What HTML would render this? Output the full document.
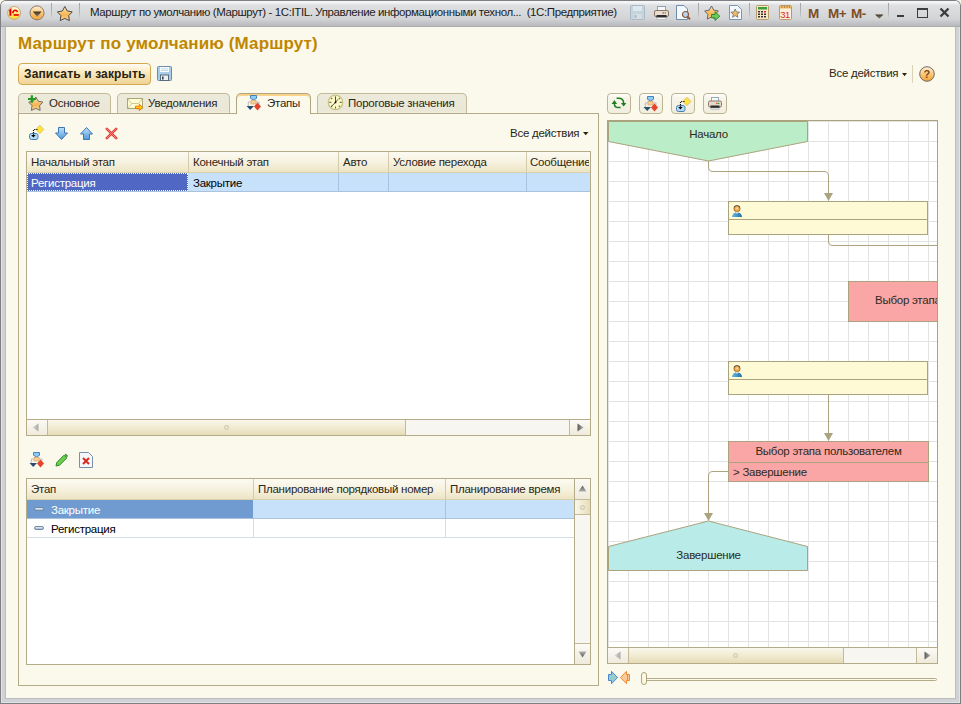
<!DOCTYPE html><html><head><meta charset="utf-8"><style>
*{box-sizing:border-box;margin:0;padding:0}
html,body{width:961px;height:704px;overflow:hidden;background:#fbf9ec;font-family:"Liberation Sans",sans-serif;font-size:11px;color:#222}
.a{position:absolute}
.t{position:absolute;white-space:pre;line-height:13px;font-size:11.5px;letter-spacing:-0.25px;color:#2b2617;margin-left:-1px}
.sep{position:absolute;width:1px;background:linear-gradient(#a2a3a6,#b4b5b8 60%,rgba(200,201,204,0))}
.tab{position:absolute;top:93px;height:20px;background:linear-gradient(#eceadb,#eae7d6 90%,#f2f0e4);border:1px solid #c2ba98;border-bottom:none;border-radius:5px 5px 0 0}
.tab.act{height:21px;background:#fbf9ec;border-color:#aea680;box-shadow:inset 0 2px 0 #f9d38a}
.btn{position:absolute;top:93px;width:24px;height:21px;border:1px solid #bdb592;border-radius:4px;background:linear-gradient(#ffffff 0,#f7f5ea 20%,#f1eedf 100%)}
.hdr{position:absolute;background:linear-gradient(#fcfaf2 0%,#f6f1de 55%,#ede4c4 100%)}
.vl{position:absolute;width:1px;background:#d3cbaa}
.sb{position:absolute;border:1px solid #b4ac88}
.thumbh{background:linear-gradient(#f9f7ec 0%,#f1ebd2 50%,#e7dcb8 100%)}
.thumbv{background:linear-gradient(90deg,#f9f7ec 0%,#f1ebd2 50%,#e7dcb8 100%)}
.btnh{background:linear-gradient(#fbfaf4,#efeadb)}
</style></head><body>
<div class="a" style="left:0;top:0;width:961px;height:704px;background:#7d7f82;border-radius:6px 6px 0 0"></div>
<div class="a" style="left:1px;top:1px;width:959px;height:702px;background:#e1e3e5;border-radius:5px 5px 0 0"></div>
<div class="a" style="left:2px;top:20px;width:957px;height:682px;background:#d0d2d5"></div>
<div class="a" style="left:1px;top:1px;width:959px;height:26px;border-radius:5px 5px 0 0;background:linear-gradient(#f7f7f8 0px,#f1f2f3 2px,#dfe0e2 4px,#d3d4d6 18px,#c6c7ca 21px,#b9babd 25px,#9d9ea1 26px)"></div>
<div class="a" style="left:5px;top:27px;width:951px;height:672px;background:#babcbf"></div>
<div class="a" style="left:6px;top:27px;width:949px;height:671px;background:#fbf9ec"></div>
<div class="sep" style="left:51px;top:3px;height:16px"></div>
<div class="sep" style="left:79px;top:3px;height:16px"></div>
<div class="sep" style="left:698px;top:3px;height:16px"></div>
<div class="sep" style="left:749px;top:3px;height:16px"></div>
<div class="sep" style="left:800px;top:3px;height:16px"></div>
<div class="sep" style="left:888px;top:3px;height:16px"></div>
<div class="t" style="left:91px;top:6px;font-size:11.5px;color:#1c1c1c;letter-spacing:-0.4px">Маршрут по умолчанию (Маршрут) - 1C:ITIL. Управление информационными технол...  (1С:Предприятие)</div>
<div class="t" style="left:19px;top:34px;font-size:17px;line-height:19px;font-weight:bold;color:#c08600;letter-spacing:0.14px">Маршрут по умолчанию (Маршрут)</div>
<div class="a" style="left:18px;top:63px;width:133px;height:22px;border:1px solid #d3a850;border-radius:4px;background:linear-gradient(#fffdf6 0,#fdf1d4 25%,#f6e2b0 60%,#efd496 100%)"></div>
<div class="t" style="left:25px;top:68px;font-size:12px;font-weight:bold;color:#2a2010;letter-spacing:0.14px">Записать и закрыть</div>
<div class="t" style="left:830px;top:67px">Все действия</div>
<div class="a" style="left:912px;top:65px;width:1px;height:18px;background:#d9d3ba"></div>
<div class="a" style="left:18px;top:113px;width:581px;height:573px;border:1px solid #b4ac88"></div>
<div class="tab" style="left:18px;width:93px"></div>
<div class="tab" style="left:117px;width:113px"></div>
<div class="tab act" style="left:236px;width:75px"></div>
<div class="tab" style="left:317px;width:150px"></div>
<div class="t" style="left:50px;top:97px">Основное</div>
<div class="t" style="left:149px;top:97px">Уведомления</div>
<div class="t" style="left:268px;top:97px">Этапы</div>
<div class="t" style="left:349px;top:97px">Пороговые значения</div>
<div class="t" style="left:511px;top:127px">Все действия</div>
<div class="a" style="left:26px;top:151px;width:565px;height:285px;border:1px solid #b4ac88;background:#fff"></div>
<div class="hdr" style="left:27px;top:152px;width:563px;height:21px;border-bottom:1px solid #d9d0ad"></div>
<div class="vl" style="left:188px;top:152px;height:20px"></div>
<div class="vl" style="left:338px;top:152px;height:20px"></div>
<div class="vl" style="left:388px;top:152px;height:20px"></div>
<div class="vl" style="left:526px;top:152px;height:20px"></div>
<div class="a" style="left:27px;top:173px;width:563px;height:19px;background:#c8e1fb;border-bottom:1px solid #a9c3de"></div>
<div class="a" style="left:338px;top:173px;width:1px;height:18px;background:#a9c3de"></div>
<div class="a" style="left:388px;top:173px;width:1px;height:18px;background:#a9c3de"></div>
<div class="a" style="left:526px;top:173px;width:1px;height:18px;background:#a9c3de"></div>
<div class="a" style="left:27px;top:173px;width:161px;height:18px;background:#5068c4;outline:1px dotted #fff;outline-offset:-1px"></div>
<div class="t" style="margin-left:0;left:31px;top:156px">Начальный этап</div>
<div class="t" style="margin-left:0;left:193px;top:156px">Конечный этап</div>
<div class="t" style="margin-left:0;left:343px;top:156px">Авто</div>
<div class="t" style="margin-left:0;left:393px;top:156px">Условие перехода</div>
<div class="a" style="left:527px;top:152px;width:62px;height:20px;overflow:hidden"><div class="t" style="left:4px;top:4px">Сообщение</div></div>
<div class="t" style="margin-left:0;left:31px;top:177px;color:#fff">Регистрация</div>
<div class="t" style="margin-left:0;left:193px;top:177px;color:#000">Закрытие</div>
<div class="a" style="left:26px;top:419px;width:565px;height:17px;border:1px solid #b4ac88;background:#f8f6f0"></div>
<div class="a btnh" style="left:27px;top:420px;width:21px;height:15px;border-right:1px solid #c2ba98"></div>
<div class="a thumbh" style="left:48px;top:420px;width:358px;height:15px;border-right:1px solid #c2ba98"></div>
<div class="a btnh" style="left:569px;top:420px;width:21px;height:15px;border-left:1px solid #c2ba98"></div>
<div class="a" style="left:26px;top:478px;width:565px;height:187px;border:1px solid #b4ac88;background:#fff"></div>
<div class="hdr" style="left:27px;top:479px;width:547px;height:21px;border-bottom:1px solid #d9d0ad"></div>
<div class="vl" style="left:253px;top:479px;height:20px"></div>
<div class="vl" style="left:445px;top:479px;height:20px"></div>
<div class="a" style="left:27px;top:500px;width:547px;height:19px;background:#c8e1fb;border-bottom:1px solid #a9c3de"></div>
<div class="a" style="left:27px;top:500px;width:226px;height:18px;background:#6f9bd1"></div>
<div class="a" style="left:445px;top:500px;width:1px;height:18px;background:#a9c3de"></div>
<div class="a" style="left:27px;top:519px;width:547px;height:19px;border-bottom:1px solid #d5dde6"></div>
<div class="a" style="left:253px;top:519px;width:1px;height:18px;background:#d5dde6"></div>
<div class="a" style="left:445px;top:519px;width:1px;height:18px;background:#d5dde6"></div>
<div class="t" style="margin-left:0;left:31px;top:483px">Этап</div>
<div class="t" style="margin-left:0;left:258px;top:483px">Планирование порядковый номер</div>
<div class="t" style="margin-left:0;left:450px;top:483px">Планирование время</div>
<div class="t" style="margin-left:0;left:51px;top:504px;color:#fff">Закрытие</div>
<div class="t" style="margin-left:0;left:51px;top:523px;color:#000">Регистрация</div>
<div class="a" style="left:34px;top:507px;width:10px;height:4px;border-radius:2px;background:linear-gradient(#e9f1f8,#9fb8cf);border:1px solid #6f8aa6"></div>
<div class="a" style="left:34px;top:526px;width:10px;height:4px;border-radius:2px;background:linear-gradient(#e9f1f8,#9fb8cf);border:1px solid #6f8aa6"></div>
<div class="a" style="left:574px;top:478px;width:17px;height:187px;border:1px solid #b4ac88;background:#f8f6f0"></div>
<div class="a btnh" style="left:575px;top:479px;width:15px;height:21px;border-bottom:1px solid #c2ba98"></div>
<div class="a thumbv" style="left:575px;top:500px;width:15px;height:15px;border-bottom:1px solid #c2ba98"></div>
<div class="a btnh" style="left:575px;top:643px;width:15px;height:21px;border-top:1px solid #c2ba98"></div>
<div class="btn" style="left:607px"></div>
<div class="btn" style="left:639px"></div>
<div class="btn" style="left:671px"></div>
<div class="btn" style="left:703px"></div>
<svg class="a" style="left:607px;top:120px" width="331" height="544" viewBox="0 0 331 544">
<rect x="0" y="0" width="331" height="544" fill="#fff"/>
<path d="M1.5 1V527M21.5 1V527M41.5 1V527M61.5 1V527M81.5 1V527M101.5 1V527M121.5 1V527M141.5 1V527M161.5 1V527M181.5 1V527M201.5 1V527M221.5 1V527M241.5 1V527M261.5 1V527M281.5 1V527M301.5 1V527M321.5 1V527M1 1.5H330M1 21.5H330M1 41.5H330M1 61.5H330M1 81.5H330M1 101.5H330M1 121.5H330M1 141.5H330M1 161.5H330M1 181.5H330M1 201.5H330M1 221.5H330M1 241.5H330M1 261.5H330M1 281.5H330M1 301.5H330M1 321.5H330M1 341.5H330M1 361.5H330M1 381.5H330M1 401.5H330M1 421.5H330M1 441.5H330M1 461.5H330M1 481.5H330M1 501.5H330M1 521.5H330" stroke="#e3e3e3" stroke-width="1" fill="none" shape-rendering="crispEdges"/>
<polygon points="1.5,1.5 200.5,1.5 200.5,21.5 101.5,41 1.5,21.5" fill="#bbedc8" stroke="#aba37d" stroke-width="1"/>
<path d="M101.5 41V47Q101.5 51.5 106 51.5H217Q221.5 51.5 221.5 56V74" stroke="#aba37d" fill="none"/>
<polygon points="217,73 226,73 221.5,81" fill="#aba37d"/>
<rect x="121.5" y="81.5" width="199" height="33" fill="#fefad6" stroke="#aba37d"/>
<path d="M121 99.5H321" stroke="#aba37d"/>
<path d="M221.5 114V121Q221.5 125.5 226 125.5H333" stroke="#aba37d" fill="none"/>
<rect x="241.5" y="161.5" width="100" height="40" fill="#fba6a6" stroke="#aba37d"/>
<rect x="121.5" y="241.5" width="199" height="33" fill="#fefad6" stroke="#aba37d"/>
<path d="M121 259.5H321" stroke="#aba37d"/>
<path d="M221.5 274V314" stroke="#aba37d" fill="none"/>
<polygon points="217,313 226,313 221.5,321" fill="#aba37d"/>
<rect x="121.5" y="321.5" width="200" height="40" fill="#fba6a6" stroke="#aba37d"/>
<path d="M121 342.5H322" stroke="#aba37d"/>
<path d="M121 351.5H106Q101.5 351.5 101.5 356V394" stroke="#aba37d" fill="none"/>
<polygon points="97,393 106,393 101.5,401" fill="#aba37d"/>
<polygon points="101.5,401 200.5,426.5 200.5,450.5 1.5,450.5 1.5,426.5" fill="#b9ece8" stroke="#aba37d" stroke-width="1"/>
<text x="101.5" y="18" font-family="Liberation Sans" font-size="11.5" letter-spacing="-0.25" fill="#2e2a20" text-anchor="middle">Начало</text>
<text x="268" y="184" font-family="Liberation Sans" font-size="11.5" letter-spacing="-0.25" fill="#2e2a20" text-anchor="start">Выбор этапа</text>
<text x="221.5" y="335" font-family="Liberation Sans" font-size="11.5" letter-spacing="-0.25" fill="#2e2a20" text-anchor="middle">Выбор этапа пользователем</text>
<text x="126" y="356" font-family="Liberation Sans" font-size="11.5" letter-spacing="-0.25" fill="#2e2a20" text-anchor="start">&gt; Завершение</text>
<text x="101.5" y="439" font-family="Liberation Sans" font-size="11.5" letter-spacing="-0.25" fill="#2e2a20" text-anchor="middle">Завершение</text>
<g transform="translate(125,85)"><defs><linearGradient id="pb205" x1="0" y1="0" x2="1" y2="0"><stop offset="0" stop-color="#6ab8e0"/><stop offset="1" stop-color="#1f6ea8"/></linearGradient><radialGradient id="pf205" cx=".5" cy=".4" r=".6"><stop offset="0" stop-color="#ffd79a"/><stop offset="1" stop-color="#d98420"/></radialGradient></defs><circle cx="5" cy="3.6" r="3.3" fill="#3a2a18"/><circle cx="5" cy="4" r="2.9" fill="url(#pf205)"/><path d="M0 12Q0 7.6 5 7.4Q10 7.6 10 12Z" fill="url(#pb205)"/><path d="M3.6 7.6L5 8.8L6.4 7.6Z" fill="#fff"/></g>
<g transform="translate(125,245)"><defs><linearGradient id="pb365" x1="0" y1="0" x2="1" y2="0"><stop offset="0" stop-color="#6ab8e0"/><stop offset="1" stop-color="#1f6ea8"/></linearGradient><radialGradient id="pf365" cx=".5" cy=".4" r=".6"><stop offset="0" stop-color="#ffd79a"/><stop offset="1" stop-color="#d98420"/></radialGradient></defs><circle cx="5" cy="3.6" r="3.3" fill="#3a2a18"/><circle cx="5" cy="4" r="2.9" fill="url(#pf365)"/><path d="M0 12Q0 7.6 5 7.4Q10 7.6 10 12Z" fill="url(#pb365)"/><path d="M3.6 7.6L5 8.8L6.4 7.6Z" fill="#fff"/></g>
<rect x="0.5" y="0.5" width="330" height="543" fill="none" stroke="#aba37d"/>
</svg>
<div class="a" style="left:607px;top:647px;width:331px;height:17px;border:1px solid #b4ac88;background:#f8f6f0"></div>
<div class="a btnh" style="left:608px;top:648px;width:21px;height:15px;border-right:1px solid #c2ba98"></div>
<div class="a thumbh" style="left:629px;top:648px;width:215px;height:15px;border-right:1px solid #c2ba98"></div>
<div class="a btnh" style="left:916px;top:648px;width:21px;height:15px;border-left:1px solid #c2ba98"></div>
<div class="a" style="left:644px;top:678px;width:293px;height:3px;border:1px solid #b4ac88;border-radius:0 2px 2px 0;background:#fbf9ec"></div>
<div class="a" style="left:641px;top:672px;width:6px;height:13px;border:1px solid #aea680;border-radius:3px;background:#fcf7e0"></div>
<svg width="0" height="0" style="position:absolute"><defs>
<linearGradient id="gY" x1="0" y1="0" x2="0" y2="1"><stop offset="0" stop-color="#fffbe0"/><stop offset=".55" stop-color="#ffec80"/><stop offset="1" stop-color="#ffdf10"/></linearGradient>
<linearGradient id="gO" x1="0" y1="0" x2="0" y2="1"><stop offset="0" stop-color="#fff0d8"/><stop offset=".5" stop-color="#fbc879"/><stop offset="1" stop-color="#f2a030"/></linearGradient>
<linearGradient id="gS" x1="0" y1="0" x2="0" y2="1"><stop offset="0" stop-color="#fde7b8"/><stop offset=".6" stop-color="#f8b450"/><stop offset="1" stop-color="#fcd79a"/></linearGradient>
<linearGradient id="gB" x1="0" y1="0" x2="0" y2="1"><stop offset="0" stop-color="#bfe2fb"/><stop offset="1" stop-color="#4f98d6"/></linearGradient>
<linearGradient id="gBl" x1="0" y1="0" x2="0" y2="1"><stop offset="0" stop-color="#88d0ff"/><stop offset="1" stop-color="#3a86cf"/></linearGradient>
<linearGradient id="gTri" x1="0" y1="0" x2="0" y2="1"><stop offset="0" stop-color="#3a3020"/><stop offset="1" stop-color="#9a8a70"/></linearGradient>
<linearGradient id="gAr" x1="0" y1="0" x2="1" y2="0"><stop offset="0" stop-color="#5a5a5a"/><stop offset="1" stop-color="#b0b0b0"/></linearGradient>
<linearGradient id="gArL" x1="1" y1="0" x2="0" y2="0"><stop offset="0" stop-color="#a8a8a8"/><stop offset="1" stop-color="#d8d8d8"/></linearGradient>
<linearGradient id="gArU" x1="0" y1="0" x2="0" y2="1"><stop offset="0" stop-color="#5a5a5a"/><stop offset="1" stop-color="#b0b0b0"/></linearGradient>
<linearGradient id="gArD" x1="0" y1="1" x2="0" y2="0"><stop offset="0" stop-color="#5a5a5a"/><stop offset="1" stop-color="#b0b0b0"/></linearGradient>
</defs></svg>
<svg class="a" style="left:7px;top:6px" width="15" height="15" viewBox="0 0 15 15"><circle cx="7.1" cy="6.9" r="6.4" fill="url(#gY)" stroke="#c9a27a" stroke-width="1"/><path d="M2.3 5.4L3.4 4.2V9.8" stroke="#e8000a" stroke-width="2" fill="none"/><path d="M10.4 6.1Q10 4.3 8.2 4.3Q6 4.4 5.9 7.2" stroke="#e8000a" stroke-width="1.6" fill="none"/><rect x="6.6" y="8.1" width="5.2" height="1.7" fill="#e8000a"/></svg>
<svg class="a" style="left:29px;top:5px" width="16" height="16" viewBox="0 0 16 16"><circle cx="8" cy="7.9" r="7" fill="url(#gO)" stroke="#8d7a66" stroke-width="1"/><polygon points="3.8,6.6 12.6,6.6 8.2,12" fill="url(#gTri)"/></svg>
<svg class="a" style="left:56px;top:5px" width="18" height="17" viewBox="0 0 18 17"><polygon points="8.80,1.50 11.21,5.98 16.22,6.89 12.70,10.57 13.38,15.61 8.80,13.40 4.22,15.61 4.90,10.57 1.38,6.89 6.39,5.98" fill="url(#gS)" stroke="#4a4a4a" stroke-width="1" stroke-linejoin="round"/></svg>
<svg class="a" style="left:630px;top:5px" width="15" height="15" viewBox="0 0 15 15"><rect x="0.5" y="0.5" width="14" height="14" rx="1" fill="#c5d3dd" stroke="#a9bac8"/><rect x="3" y="1" width="9" height="5" fill="#dde8ee"/><rect x="3.5" y="9" width="8" height="5" fill="#d7dfe4"/><rect x="4.5" y="10" width="2" height="3" fill="#a9bac8"/></svg>
<svg class="a" style="left:654px;top:6px" width="15" height="14" viewBox="0 0 15 14"><rect x="3.5" y="0.5" width="8" height="4.5" fill="#f4f8fb" stroke="#8fa3b6"/><rect x="0.5" y="4.5" width="14" height="6" rx="1.5" fill="#e9ddd0" stroke="#8d7565"/><rect x="2.5" y="9" width="10" height="2.8" fill="#2d2d2d"/><rect x="3" y="11.6" width="9" height="1.8" fill="#fafafa" stroke="#999" stroke-width=".5"/><rect x="10.6" y="6.3" width="1.4" height="1.2" fill="#3a3"/><rect x="8.6" y="6.3" width="1.4" height="1.2" fill="#d33"/></svg>
<svg class="a" style="left:676px;top:5px" width="15" height="15" viewBox="0 0 15 15"><path d="M0.5 0.5H8L11.5 4V14.5H0.5Z" fill="#f3f8fc" stroke="#6f8cab"/><circle cx="9.5" cy="9.5" r="3" fill="#bcd6f0" stroke="#8a5a3a" stroke-width="1.2"/><path d="M11.5 11.6L14 14.2" stroke="#8a5a3a" stroke-width="2"/></svg>
<svg class="a" style="left:704px;top:5px" width="17" height="16" viewBox="0 0 17 16"><polygon points="7.50,1.00 9.73,5.13 14.35,5.98 11.11,9.37 11.73,14.02 7.50,12.00 3.27,14.02 3.89,9.37 0.65,5.98 5.27,5.13" fill="url(#gS)" stroke="#666" stroke-width="1" stroke-linejoin="round"/><path d="M7.5 9.5H11V6.8L15.8 11.2L11 15.5V12.8H7.5Z" fill="#6ccc5a" stroke="#2c8a2a" stroke-width="1"/></svg>
<svg class="a" style="left:729px;top:5px" width="13" height="15" viewBox="0 0 13 15"><path d="M0.5 0.5H8.5L12.5 4.5V14.5H0.5Z" fill="#f6f9fc" stroke="#7b95b3"/><polygon points="6.20,4.00 7.38,6.98 10.57,7.18 8.10,9.22 8.90,12.32 6.20,10.60 3.50,12.32 4.30,9.22 1.83,7.18 5.02,6.98" fill="url(#gS)" stroke="#6a6a6a" stroke-width=".8"/></svg>
<svg class="a" style="left:756px;top:5px" width="13" height="15" viewBox="0 0 13 15"><rect x="0.5" y="0.5" width="12" height="14" rx="1" fill="#f8e6c8" stroke="#b89a6a"/><rect x="2" y="2" width="9" height="2.5" fill="#3aa03a"/><g fill="#333"><rect x="2" y="6" width="2" height="1.5"/><rect x="5" y="6" width="2" height="1.5"/><rect x="2" y="8.5" width="2" height="1.5"/><rect x="5" y="8.5" width="2" height="1.5"/><rect x="2" y="11" width="2" height="1.5"/><rect x="5" y="11" width="2" height="1.5"/><rect x="8" y="8.5" width="2" height="1.5"/><rect x="8" y="11" width="2" height="1.5"/></g><rect x="8" y="6" width="2" height="1.5" fill="#d22"/></svg>
<svg class="a" style="left:779px;top:5px" width="13" height="15" viewBox="0 0 13 15"><rect x="0.5" y="0.5" width="12" height="14" rx="1" fill="#fbf1dc" stroke="#b89a6a"/><rect x="1" y="1" width="11" height="2.5" fill="#f2b860"/><g fill="#7a5a3a"><rect x="2.5" y="1.5" width="1" height="1"/><rect x="5" y="1.5" width="1" height="1"/><rect x="7.5" y="1.5" width="1" height="1"/><rect x="10" y="1.5" width="1" height="1"/></g><text x="1.3" y="13" font-family="Liberation Sans" font-size="9.5" fill="#e02a1a" letter-spacing="-0.5">31</text></svg>
<div class="t" style="left:809px;top:7px;font-size:13.5px;line-height:14px;font-weight:bold;color:#7d4e24;letter-spacing:-0.6px">M</div>
<div class="t" style="left:829px;top:7px;font-size:13.5px;line-height:14px;font-weight:bold;color:#7d4e24;letter-spacing:-0.6px">M+</div>
<div class="t" style="left:852px;top:7px;font-size:13.5px;line-height:14px;font-weight:bold;color:#7d4e24;letter-spacing:-0.6px">M-</div>
<svg class="a" style="left:875px;top:14px" width="9" height="5" viewBox="0 0 9 5"><polygon points="0,0.5 8.5,0.5 4.25,4.8" fill="url(#gTri)"/></svg>
<div class="a" style="left:897px;top:15px;width:7px;height:2px;background:#3c3c3c"></div>
<div class="a" style="left:917px;top:8px;width:11px;height:10px;border:1px solid #3c3c3c;border-top:2px solid #3c3c3c"></div>
<svg class="a" style="left:939px;top:7px" width="11" height="11" viewBox="0 0 11 11"><path d="M1.5 1.5L9.5 9.5M9.5 1.5L1.5 9.5" stroke="#3c3c3c" stroke-width="2.3"/></svg>
<svg class="a" style="left:157px;top:66px" width="15" height="15" viewBox="0 0 15 15"><rect x="0.5" y="0.5" width="14" height="14" rx="1" fill="#a8cdea" stroke="#6e8aa6"/><rect x="3" y="1" width="9" height="5" fill="#fafdff"/><rect x="4" y="2.3" width="7" height="1" fill="#b9dbe6"/><rect x="4" y="4" width="7" height="1" fill="#b9dbe6"/><rect x="3.5" y="9" width="8" height="5.5" fill="#f0f0f0" stroke="#5a6a7a" stroke-width="1"/><rect x="5" y="10.5" width="1.6" height="3" fill="#334455"/></svg>
<svg class="a" style="left:902px;top:73px" width="5" height="4" viewBox="0 0 5 4"><polygon points="0,0 5,0 2.5,3.2" fill="#2d2410"/></svg>
<svg class="a" style="left:919px;top:66px" width="16" height="16" viewBox="0 0 16 16"><circle cx="8" cy="8" r="7.3" fill="url(#gO)" stroke="#6f6a66" stroke-width="1"/><text x="4.6" y="12.2" font-family="Liberation Sans" font-weight="bold" font-size="11" fill="#7a4a20">?</text></svg>
<svg class="a" style="left:27px;top:94px" width="18" height="18" viewBox="0 0 18 18"><polygon points="8.80,3.00 11.15,7.16 15.84,8.11 12.60,11.64 13.15,16.39 8.80,14.40 4.45,16.39 5.00,11.64 1.76,8.11 6.45,7.16" fill="url(#gS)" stroke="#6e6e6e" stroke-width="1" stroke-linejoin="round"/><path d="M4.8 1.2V8.8M1 5H8.8" stroke="#209a20" stroke-width="2.2"/></svg>
<svg class="a" style="left:127px;top:97px" width="17" height="15" viewBox="0 0 17 15"><rect x="0.5" y="1.5" width="15" height="10" fill="#fefcd2" stroke="#aaa47a"/><path d="M1 2L4.5 6.5H11.5L15 2M1 11L4.5 7" stroke="#c6c198" fill="none" stroke-width=".9"/><path d="M8.5 9.2H12.3V7.2L15.6 10.4L12.3 13.6V11.6H8.5Z" fill="#ffd000" stroke="#f4700c" stroke-width="1"/></svg>
<svg class="a" style="left:246px;top:94px" width="16" height="17" viewBox="0 0 16 17"><path d="M4.5 1.5H10.5V4.3L7.5 5.9L4.5 4.3Z" fill="#8ccdf6" stroke="#3a78b8" stroke-width=".9"/><rect x="5" y="6.5" width="5" height="3.5" fill="#f8cf96" stroke="#d9a060" stroke-width=".7"/><path d="M5 8H2.3V12M10 8H13V10" stroke="#bbb" fill="none"/><polygon points="0.5,12 8,12 4.2,16" fill="#2d4e6e"/><polygon points="11.5,8.5 15,12.5 11.5,16.5 8,12.5" fill="#e4452a"/></svg>
<svg class="a" style="left:327px;top:94px" width="17" height="17" viewBox="0 0 17 17"><circle cx="8.5" cy="8.4" r="7.2" fill="#fdf9c8" stroke="#c8c38c" stroke-width="1.3"/><g stroke="#6c6a4c" stroke-width="1.1"><path d="M8.5 2.2V4.2M8.5 12.6V14.6M2.3 8.4H4.3M12.7 8.4H14.7M4.1 4L5.2 5.1M12.9 4L11.8 5.1M4.1 12.8L5.2 11.7M12.9 12.8L11.8 11.7"/></g><path d="M8.5 3.2V8.4L10.9 5.4M8.5 8.4L4.2 12.6" stroke="#444230" stroke-width=".9" fill="none"/><circle cx="8.5" cy="8.4" r=".9" fill="#000"/></svg>
<svg class="a" style="left:28px;top:124px" width="17" height="17" viewBox="0 0 17 17"><polygon points="11.9,1.3 15.9,5.4 11.9,9.6 7.9,5.4" fill="#ffe53a" stroke="#d8b86a" stroke-width=".8"/><rect x="1.5" y="9.5" width="8.5" height="6" rx="2" fill="#b5dcf6" stroke="#4a7eae"/><path d="M5.5 11.5V5.5H9.5" stroke="#111" stroke-width="1.2" stroke-dasharray="1.2 1" fill="none"/><polygon points="3.2,11 7.6,11 5.4,13.6" fill="#000"/></svg>
<svg class="a" style="left:55px;top:127px" width="13" height="13" viewBox="0 0 13 13"><path d="M3.5 0.5H9.5V6H12.5L6.5 12.5L0.5 6H3.5Z" fill="url(#gB)" stroke="#3d76b3" stroke-width="1"/></svg>
<svg class="a" style="left:80px;top:127px" width="13" height="13" viewBox="0 0 13 13"><path d="M3.5 12.5H9.5V7H12.5L6.5 0.5L0.5 7H3.5Z" fill="url(#gB)" stroke="#3d76b3" stroke-width="1"/></svg>
<svg class="a" style="left:105px;top:127px" width="13" height="13" viewBox="0 0 13 13"><path d="M1.8 1.8L11.2 11.2M11.2 1.8L1.8 11.2" stroke="#e0403a" stroke-width="2.6" stroke-linecap="round"/><path d="M1.8 1.8L11.2 11.2M11.2 1.8L1.8 11.2" stroke="#f88a7a" stroke-width=".9" stroke-linecap="round"/></svg>
<svg class="a" style="left:583px;top:132px" width="6" height="4" viewBox="0 0 6 4"><polygon points="0,0 5.5,0 2.75,3.3" fill="#2d2410"/></svg>
<svg class="a" style="left:29px;top:451px" width="16" height="17" viewBox="0 0 16 17"><path d="M4.5 1.5H10.5V4.3L7.5 5.9L4.5 4.3Z" fill="#8ccdf6" stroke="#3a78b8" stroke-width=".9"/><rect x="5" y="6.5" width="5" height="3.5" fill="#f8cf96" stroke="#d9a060" stroke-width=".7"/><path d="M5 8H2.3V12M10 8H13V10" stroke="#bbb" fill="none"/><polygon points="0.5,12 8,12 4.2,16" fill="#2d4e6e"/><polygon points="11.5,8.5 15,12.5 11.5,16.5 8,12.5" fill="#e4452a"/></svg>
<svg class="a" style="left:55px;top:453px" width="13" height="14" viewBox="0 0 13 14"><path d="M1 13L1.8 9.5L9 2.2L11.8 5L4.5 12.2Z" fill="#6fcf4a" stroke="#2c8a2a" stroke-width="1"/><path d="M9.5 1.8L10.8 0.8L13 3L12 4.3Z" fill="#2c8a2a"/></svg>
<svg class="a" style="left:79px;top:452px" width="15" height="16" viewBox="0 0 15 16"><path d="M0.5 0.5H9.5L13.5 4.5V15.5H0.5Z" fill="#f5f8fb" stroke="#7990a8"/><path d="M4 6L10 12M10 6L4 12" stroke="#d82a1e" stroke-width="2"/></svg>
<svg class="a" style="left:609px;top:95px" width="20" height="17" viewBox="0 0 20 17"><g fill="#1f7d1f"><polygon points="2.6,8.9 8.1,8.9 5.35,5.1"/><polygon points="11.9,8.1 17.4,8.1 14.65,11.6"/></g><path d="M5.35 8.5Q5.35 12.6 9.4 12.6H11.6M7.6 3.3H9.6Q14.65 3.3 14.65 8.3" stroke="#1f7d1f" stroke-width="1.5" fill="none"/></svg>
<svg class="a" style="left:643px;top:95px" width="16" height="17" viewBox="0 0 16 17"><path d="M4.5 1.5H10.5V4.3L7.5 5.9L4.5 4.3Z" fill="#8ccdf6" stroke="#3a78b8" stroke-width=".9"/><rect x="5" y="6.5" width="5" height="3.5" fill="#f8cf96" stroke="#d9a060" stroke-width=".7"/><path d="M5 8H2.3V12M10 8H13V10" stroke="#bbb" fill="none"/><polygon points="0.5,12 8,12 4.2,16" fill="#2d4e6e"/><polygon points="11.5,8.5 15,12.5 11.5,16.5 8,12.5" fill="#e4452a"/></svg>
<svg class="a" style="left:675px;top:96px" width="17" height="17" viewBox="0 0 17 17"><polygon points="11.9,1.3 15.9,5.4 11.9,9.6 7.9,5.4" fill="#ffe53a" stroke="#d8b86a" stroke-width=".8"/><rect x="1.5" y="9.5" width="8.5" height="6" rx="2" fill="#b5dcf6" stroke="#4a7eae"/><path d="M5.5 11.5V5.5H9.5" stroke="#111" stroke-width="1.2" stroke-dasharray="1.2 1" fill="none"/><polygon points="3.2,11 7.6,11 5.4,13.6" fill="#000"/></svg>
<svg class="a" style="left:708px;top:97px" width="14" height="13" viewBox="0 0 14 13"><rect x="3.5" y="0.5" width="7" height="4" fill="#f4f8fb" stroke="#9aaab8"/><rect x="0.5" y="4" width="13" height="6" rx="1.5" fill="#e6d9cb" stroke="#8d7565"/><rect x="2.5" y="8.5" width="9" height="2.5" fill="#2d2d2d"/><rect x="3" y="11" width="8" height="1.6" fill="#fafafa" stroke="#999" stroke-width=".5"/><rect x="10" y="5.8" width="1.4" height="1.2" fill="#3a3"/><rect x="8.2" y="5.8" width="1.4" height="1.2" fill="#d33"/></svg>
<svg class="a" style="left:32px;top:423px" width="7" height="9" viewBox="0 0 7 9"><polygon points="6.5,0.5 6.5,8.5 0.5,4.5" fill="url(#gArL)"/></svg>
<svg class="a" style="left:577px;top:423px" width="7" height="9" viewBox="0 0 7 9"><polygon points="0.5,0.5 0.5,8.5 6.5,4.5" fill="url(#gAr)"/></svg>
<svg class="a" style="left:614px;top:651px" width="7" height="9" viewBox="0 0 7 9"><polygon points="6.5,0.5 6.5,8.5 0.5,4.5" fill="url(#gArL)"/></svg>
<svg class="a" style="left:924px;top:651px" width="7" height="9" viewBox="0 0 7 9"><polygon points="0.5,0.5 0.5,8.5 6.5,4.5" fill="url(#gAr)"/></svg>
<svg class="a" style="left:578px;top:485px" width="9" height="7" viewBox="0 0 9 7"><polygon points="0.5,6.5 8.5,6.5 4.5,0.5" fill="url(#gArU)"/></svg>
<svg class="a" style="left:578px;top:651px" width="9" height="7" viewBox="0 0 9 7"><polygon points="0.5,0.5 8.5,0.5 4.5,6.5" fill="url(#gArD)"/></svg>
<div class="a" style="left:224px;top:425px;width:5px;height:5px;border-radius:50%;background:#e9e4d0;border:1px solid #cfc7a8"></div>
<div class="a" style="left:733px;top:653px;width:5px;height:5px;border-radius:50%;background:#e9e4d0;border:1px solid #cfc7a8"></div>
<div class="a" style="left:580px;top:505px;width:5px;height:5px;border-radius:50%;background:#e9e4d0;border:1px solid #cfc7a8"></div>
<svg class="a" style="left:607px;top:670px" width="24" height="16" viewBox="0 0 24 16"><path d="M1.5 4.5H4.5V1.3L10.6 7.5L4.5 13.7V10.5H1.5Z" fill="#97cbcc" stroke="#4a86cc" stroke-width="1"/><path d="M13.4 7.5L19.5 1.3V4.5H22.5V10.5H19.5V13.7Z" fill="#fcc898" stroke="#f2892c" stroke-width="1"/><path d="M20.5 4.5V10.5" stroke="#f2892c" stroke-width="1"/></svg>
</body></html>
